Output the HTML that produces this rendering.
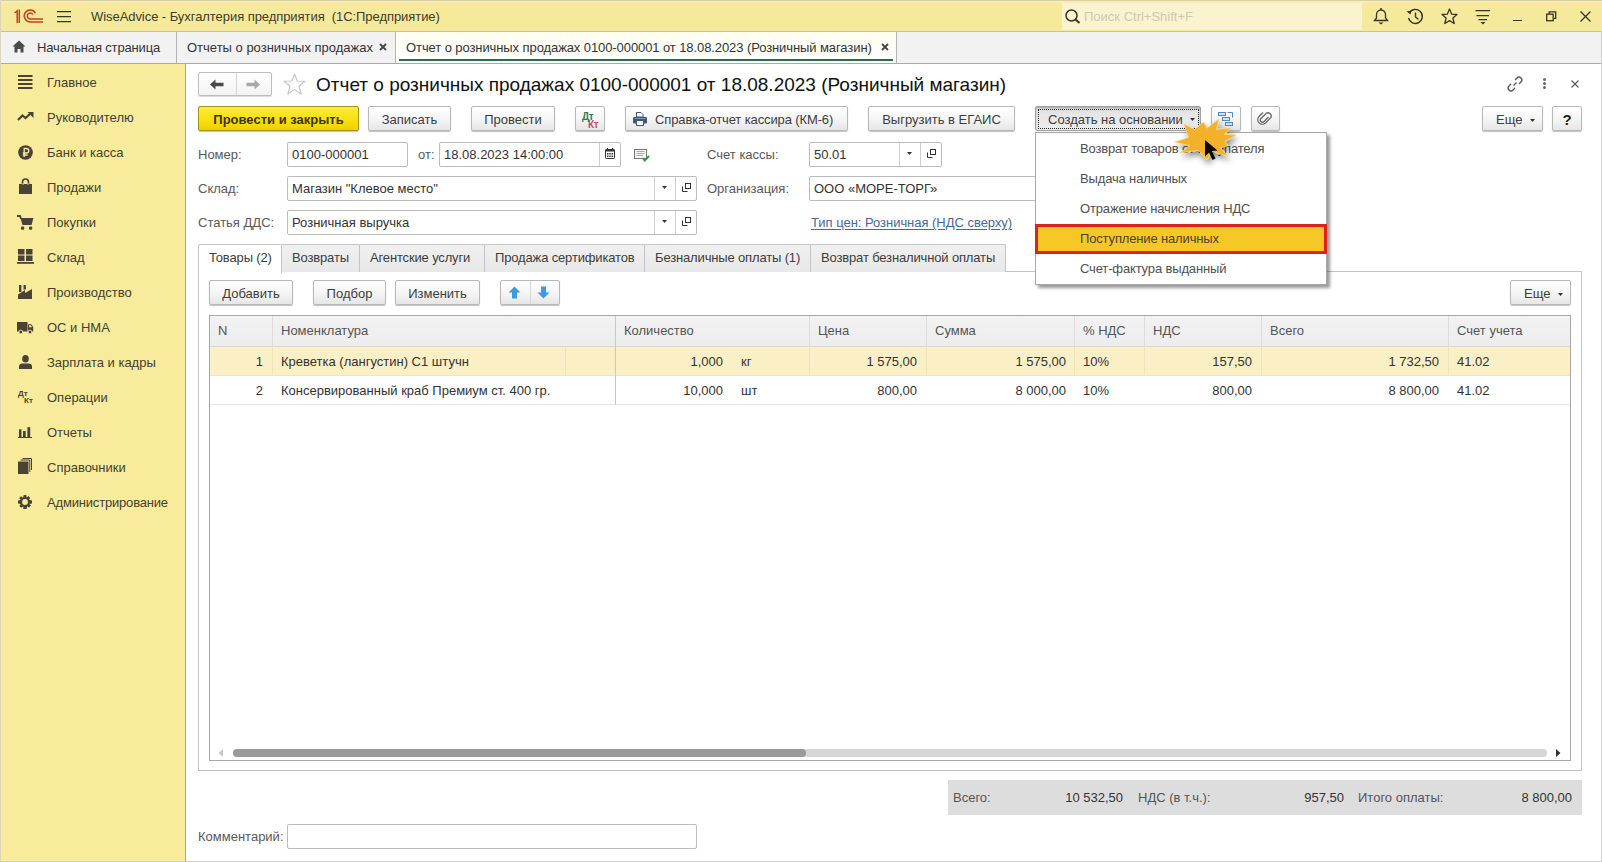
<!DOCTYPE html>
<html><head><meta charset="utf-8">
<style>
*{box-sizing:border-box;margin:0;padding:0}
html,body{width:1602px;height:862px;overflow:hidden;background:#fff}
body{position:relative;font-family:"Liberation Sans",sans-serif;font-size:13px;color:#333}
.a{position:absolute}
.t{position:absolute;white-space:nowrap;line-height:15px}
svg{position:absolute;overflow:visible}
/* title bar */
#tb{left:0;top:0;width:1602px;height:32px;background:linear-gradient(#D8D0A0 0,#D8D0A0 1px,#F6EDB8 1px,#F6EDB8 3px,#FAE89C 3px,#FAE89C 8px,#F5EA9C 8px);border-bottom:1px solid #C9C190}
#search{left:1062px;top:3px;width:300px;height:27px;background:#FBF3CE}
/* window tabs */
#wt{left:0;top:32px;width:1602px;height:32px;background:#F2F2F2;border-bottom:1px solid #A9A9A9}
.wtab{position:absolute;top:0;height:31px;border-right:1px solid #B4B4B4}
/* sidebar */
#sb{left:0;top:64px;width:186px;height:798px;background:#F8EB9C;border-right:1px solid #ABA47E}
.si{position:absolute;left:47px;color:#45402F;white-space:nowrap}
/* buttons */
.btn{position:absolute;height:25px;border:1px solid #B8B8B8;border-radius:2px;background:linear-gradient(#FFFFFF,#F4F4F4 55%,#E6E6E6);box-shadow:0 1px 1px rgba(0,0,0,.25);color:#3D3D3D;text-align:center;line-height:23px;padding-top:1px;white-space:nowrap}
.btn.def{background:linear-gradient(#FCEB3A,#F8E010 55%,#F0D000);border-color:#A39418;color:#3E3300;font-weight:bold;letter-spacing:0}
.inp{position:absolute;height:25px;border:1px solid #BCBCBC;border-radius:2px;background:#fff;color:#333;line-height:22px;padding-left:4px;padding-top:1px;white-space:nowrap;overflow:hidden}
.lbl{position:absolute;color:#595959;white-space:nowrap;line-height:15px}
.sep{position:absolute;top:0;width:1px;height:22px;background:#CFCFCF}
/* tabs */
.ptab{position:absolute;top:244px;height:28px;border:1px solid #C4C4C4;border-bottom:none;border-radius:2px 2px 0 0;background:linear-gradient(#F0F0F0,#E8E8E8);color:#3D3D3D;text-align:left;padding-left:10px;letter-spacing:-0.15px;line-height:25px;white-space:nowrap}
.hd{position:absolute;top:0;height:31px;color:#4D4D4D;line-height:30px;padding-left:8px;white-space:nowrap}
.cell{position:absolute;white-space:nowrap;color:#333}
.vl{position:absolute;width:1px;background:#DCDCDC}
</style></head><body>

<!-- TITLE BAR -->
<div id="tb" class="a"></div>
<svg style="left:14px;top:9px" width="30" height="15" viewBox="0 0 30 15">
  <g fill="none" stroke="#C43F22" stroke-width="1.5">
  <path d="M0.6 4 L3.2 1.8 V14"/><path d="M5.3 0.5 V14"/>
  <path d="M29 13 H16.25 A6 6 0 1 1 21.45 4"/>
  <path d="M29 10 H16.25 A3 3 0 1 1 18.85 5.5"/>
  </g>
</svg>
<svg style="left:57px;top:10px" width="15" height="13" viewBox="0 0 15 13"><path d="M0 1.6 H14 M0 6.6 H14 M0 11.6 H14" stroke="#3A3222" stroke-width="1.3"/></svg>
<div class="t" style="left:91px;top:9px;color:#3F3A2C;font-size:13px;letter-spacing:-0.06px">WiseAdvice - Бухгалтерия предприятия&nbsp; (1С:Предприятие)</div>
<div id="search" class="a"></div>
<svg style="left:1065px;top:9px" width="16" height="15" viewBox="0 0 16 15"><circle cx="6.5" cy="6.5" r="5.5" fill="none" stroke="#3A3222" stroke-width="1.5"/><path d="M10.5 10.5 L14.5 14" stroke="#3A3222" stroke-width="2"/></svg>
<div class="t" style="left:1084px;top:9px;color:#CFC9B3">Поиск Ctrl+Shift+F</div>
<!-- bell -->
<svg style="left:1373px;top:8px" width="16" height="17" viewBox="0 0 16 17"><path d="M1.5 12.5 H14.5 L12.5 10 V6.5 A4.5 4.5 0 0 0 3.5 6.5 V10 Z" fill="none" stroke="#3A3222" stroke-width="1.3"/><path d="M7 1 h2" stroke="#3A3222" stroke-width="1.3"/><path d="M5.5 14.5 h5 l-2.5 2z" fill="#3A3222"/></svg>
<!-- history -->
<svg style="left:1406px;top:8px" width="18" height="17" viewBox="0 0 18 17"><path d="M3.2 5 A7 7 0 1 1 2.5 10" fill="none" stroke="#3A3222" stroke-width="1.4"/><path d="M0.5 3.5 L4.5 6.5 L5.5 2.5z" fill="#3A3222"/><path d="M9.5 4.5 V9 L12.5 11.5" fill="none" stroke="#3A3222" stroke-width="1.4"/></svg>
<!-- star -->
<svg style="left:1441px;top:8px" width="17" height="17" viewBox="0 0 17 17"><path d="M8.5 1 L10.7 6.2 L16 6.5 L11.9 10 L13.2 15.5 L8.5 12.6 L3.8 15.5 L5.1 10 L1 6.5 L6.3 6.2 Z" fill="none" stroke="#3A3222" stroke-width="1.3" stroke-linejoin="round"/></svg>
<!-- filter lines -->
<svg style="left:1475px;top:10px" width="16" height="15" viewBox="0 0 16 15"><path d="M0.5 0.6 H15 M1.5 5.6 H14 M3.5 9.6 H12" stroke="#3A3222" stroke-width="1.2"/><path d="M5.5 12 h5 l-2.5 2.5z" fill="#3A3222"/></svg>
<div class="a" style="left:1513px;top:20px;width:9px;height:1px;background:#3A3222"></div>
<svg style="left:1546px;top:11px" width="11" height="11" viewBox="0 0 11 11"><rect x="0.7" y="3.2" width="6.5" height="6.5" fill="none" stroke="#3A3222" stroke-width="1.3"/><path d="M3.2 3 V0.8 H9.7 V7.3 H7.5" fill="none" stroke="#3A3222" stroke-width="1.3"/></svg>
<svg style="left:1580px;top:11px" width="11" height="11" viewBox="0 0 11 11"><path d="M0.5 0.5 L10.5 10.5 M10.5 0.5 L0.5 10.5" stroke="#3A3222" stroke-width="1.3"/></svg>

<!-- WINDOW TABS -->
<div id="wt" class="a">
  <div class="wtab" style="left:0;width:177px"></div>
  <div class="wtab" style="left:177px;width:219px"></div>
  <div class="wtab" style="left:396px;width:501px;background:linear-gradient(#FFFDF0,#FFFFFF)"></div>
</div>
<svg style="left:12px;top:40px" width="14" height="13" viewBox="0 0 14 13"><path d="M7 0.5 L13.5 6.5 H11.5 V12.5 H8.5 V9 H5.5 V12.5 H2.5 V6.5 H0.5 Z" fill="#4A4A4A"/></svg>
<div class="t" style="left:37px;top:40px;color:#333;letter-spacing:-0.15px">Начальная страница</div>
<div class="t" style="left:187px;top:40px;color:#333">Отчеты о розничных продажах</div>
<svg style="left:379px;top:43px" width="8" height="8" viewBox="0 0 8 8"><path d="M1 1 L7 7 M7 1 L1 7" stroke="#444" stroke-width="1.8"/></svg>
<div class="t" style="left:406px;top:40px;color:#333;letter-spacing:-0.09px">Отчет о розничных продажах 0100-000001 от 18.08.2023 (Розничный магазин)</div>
<svg style="left:881px;top:43px" width="8" height="8" viewBox="0 0 8 8"><path d="M1 1 L7 7 M7 1 L1 7" stroke="#444" stroke-width="1.8"/></svg>
<div class="a" style="left:399px;top:59px;width:494px;height:2px;background:#2A6E4C"></div>

<!-- SIDEBAR -->
<div id="sb" class="a"></div>
<div class="si t" style="top:75px">Главное</div>
<div class="si t" style="top:110px">Руководителю</div>
<div class="si t" style="top:145px">Банк и касса</div>
<div class="si t" style="top:180px">Продажи</div>
<div class="si t" style="top:215px">Покупки</div>
<div class="si t" style="top:250px">Склад</div>
<div class="si t" style="top:285px">Производство</div>
<div class="si t" style="top:320px">ОС и НМА</div>
<div class="si t" style="top:355px">Зарплата и кадры</div>
<div class="si t" style="top:390px">Операции</div>
<div class="si t" style="top:425px">Отчеты</div>
<div class="si t" style="top:460px">Справочники</div>
<div class="si t" style="top:495px;letter-spacing:-0.18px">Администрирование</div>



<!-- SIDEBAR ICONS -->
<svg style="left:18px;top:75px" width="15" height="14" viewBox="0 0 15 14"><path d="M0 1 H14.5 M0 5 H14.5 M0 9 H14.5 M0 13 H14.5" stroke="#4A4236" stroke-width="2"/></svg>
<svg style="left:17px;top:112px" width="17" height="9" viewBox="0 0 17 9"><path d="M1 8 L5.5 3.5 L8.5 6 L13.5 1.5" fill="none" stroke="#4A4236" stroke-width="2.2" stroke-linejoin="miter"/><path d="M10.5 0 H16.5 V6 Z" fill="#4A4236"/></svg>
<svg style="left:18px;top:145px" width="15" height="15" viewBox="0 0 15 15"><circle cx="7.5" cy="7.5" r="7.3" fill="#4A4236"/><path d="M6.2 12 V3.5 H8.5 A2.2 2.2 0 0 1 8.5 8 H4.8 M4.8 10 H9.5" fill="none" stroke="#FAEBA0" stroke-width="1.3"/></svg>
<svg style="left:19px;top:179px" width="13" height="15" viewBox="0 0 13 15"><path d="M3.5 5 V3 A3 3 0 0 1 9.5 3 V5" fill="none" stroke="#4A4236" stroke-width="1.6"/><path d="M0 5 H13 V15 H0 Z" fill="#4A4236"/><path d="M4 4 V6 M9 4 V6" stroke="#FAEBA0" stroke-width="0.8"/></svg>
<svg style="left:17px;top:215px" width="17" height="15" viewBox="0 0 17 15"><path d="M0 1 H3 L4.2 4" fill="none" stroke="#4A4236" stroke-width="1.8"/><path d="M3.5 3 H16.5 L14.5 10 H5.5 Z" fill="#4A4236"/><rect x="4" y="11.5" width="3.2" height="3.2" rx="1" fill="#4A4236"/><rect x="12" y="11.5" width="3.2" height="3.2" rx="1" fill="#4A4236"/></svg>
<svg style="left:17px;top:249px" width="17" height="15" viewBox="0 0 17 15"><rect x="1" y="0" width="6.5" height="5.5" fill="#4A4236"/><rect x="9" y="0" width="6.5" height="5.5" fill="#4A4236"/><rect x="1" y="6.5" width="6.5" height="5.5" fill="#4A4236"/><rect x="9" y="6.5" width="6.5" height="5.5" fill="#4A4236"/><rect x="0" y="13" width="17" height="1.8" fill="#4A4236"/></svg>
<svg style="left:17px;top:284px" width="17" height="16" viewBox="17 284 17 16"><path d="M18 299 V294.5 L25 290 V293 L32 289 V299 Z" fill="#4A4236"/><rect x="19" y="285" width="2.4" height="7" fill="#4A4236"/><rect x="23.5" y="285" width="2.4" height="4.5" fill="#4A4236"/></svg>
<svg style="left:16px;top:321px" width="19" height="14" viewBox="16 321 19 14"><rect x="17" y="322" width="10.5" height="9.5" fill="#4A4236"/><path d="M28 324.3 H31.2 L33.2 327 V331.5 H28 Z" fill="#4A4236"/><path d="M29 325.3 H30.8 L32 327.3 H29 Z" fill="#F8EB9C"/><circle cx="20.8" cy="332" r="1.9" fill="#4A4236" stroke="#F8EB9C" stroke-width="0.9"/><circle cx="30" cy="332" r="1.9" fill="#4A4236" stroke="#F8EB9C" stroke-width="0.9"/></svg>
<svg style="left:19px;top:355px" width="13" height="14" viewBox="0 0 13 14"><ellipse cx="6.5" cy="3.8" rx="3.3" ry="3.8" fill="#4A4236"/><path d="M0 14 V11.5 Q0 8.5 3.5 8.5 H9.5 Q13 8.5 13 11.5 V14 Z" fill="#4A4236"/></svg>
<div class="t" style="left:18px;top:390px;font-size:8px;line-height:8px;color:#4A4236;font-weight:bold;letter-spacing:0">Дт</div>
<div class="t" style="left:24px;top:397px;font-size:8px;line-height:8px;color:#4A4236;font-weight:bold;letter-spacing:0">Кт</div>
<svg style="left:17px;top:426px" width="16" height="13" viewBox="17 426 16 13"><rect x="19" y="429.3" width="2.5" height="8" fill="#4A4236"/><rect x="23" y="431" width="2.7" height="6.3" fill="#4A4236"/><rect x="27.4" y="427.2" width="2.8" height="10.1" fill="#4A4236"/><rect x="18" y="437" width="14" height="1" fill="#4A4236"/></svg>
<svg style="left:18px;top:458px" width="14" height="16" viewBox="0 0 14 16"><path d="M4.5 0.5 H13.5 V12" fill="none" stroke="#4A4236" stroke-width="1"/><path d="M2.5 2 H11.8 V14" fill="none" stroke="#4A4236" stroke-width="1"/><rect x="0" y="3.5" width="10.5" height="12.5" fill="#4A4236"/></svg>
<svg style="left:18px;top:495px" width="14" height="14" viewBox="0 0 14 14"><g transform="translate(7 7)" fill="#4A4236"><path d="M-1.3 -7 H1.3 L1.6 -4.6 L3.4 -5.9 L5.2 -4.1 L4 -2.3 L7 -1.6 V1.6 L4.4 1.9 L5.9 3.6 L4.1 5.4 L2.2 4.2 L1.6 7 H-1.6 L-1.9 4.4 L-3.8 5.8 L-5.6 4 L-4.3 2.1 L-7 1.6 V-1.6 L-4.4 -2 L-5.8 -3.9 L-4 -5.7 L-2 -4.3 Z"/><circle r="3.6"/></g><circle cx="7" cy="7" r="2.9" fill="#F8EB9C"/></svg>

<!-- FORM HEADER -->
<div class="a" style="left:198px;top:72px;width:74px;height:24px;border:1px solid #BDBDBD;border-radius:2px;background:linear-gradient(#FFFFFF,#F3F3F3);box-shadow:0 1px 1px rgba(0,0,0,.15)"></div>
<div class="a" style="left:236px;top:73px;width:1px;height:22px;background:#D5D5D5"></div>
<svg style="left:210px;top:79px" width="14" height="11" viewBox="0 0 14 11"><path d="M0 5.5 L5.5 0.5 V3.8 H13.5 V7.2 H5.5 V10.5 Z" fill="#4A4A4A"/></svg>
<svg style="left:246px;top:79px" width="14" height="11" viewBox="0 0 14 11"><path d="M14 5.5 L8.5 0.5 V3.8 H0.5 V7.2 H8.5 V10.5 Z" fill="#A8A8A8"/></svg>
<svg style="left:283px;top:73px" width="23" height="22" viewBox="0 0 23 22"><path d="M11.5 1 L14.3 8 L22 8.3 L16 13 L18.2 21 L11.5 16.6 L4.8 21 L7 13 L1 8.3 L8.7 8 Z" fill="none" stroke="#C4C4C4" stroke-width="1.1" stroke-linejoin="round"/></svg>
<div class="t" style="left:316px;top:74px;font-size:19px;line-height:21px;color:#111;letter-spacing:0">Отчет о розничных продажах 0100-000001 от 18.08.2023 (Розничный магазин)</div>

<svg style="left:1507px;top:76px" width="16" height="16" viewBox="0 0 16 16"><g fill="none" stroke="#555" stroke-width="1.3"><path d="M6.5 9.5 L9.5 6.5"/><path d="M8 4 L10 2 A2.5 2.5 0 0 1 14 6 L12 8"/><path d="M8 12 L6 14 A2.5 2.5 0 0 1 2 10 L4 8"/></g></svg>
<div class="a" style="left:1543px;top:78px;width:3px;height:3px;border-radius:50%;background:#666"></div>
<div class="a" style="left:1543px;top:82px;width:3px;height:3px;border-radius:50%;background:#666"></div>
<div class="a" style="left:1543px;top:86px;width:3px;height:3px;border-radius:50%;background:#666"></div>
<svg style="left:1571px;top:80px" width="8" height="8" viewBox="0 0 8 8"><path d="M0.5 0.5 L7.5 7.5 M7.5 0.5 L0.5 7.5" stroke="#555" stroke-width="1.1"/></svg>

<!-- COMMAND BAR -->
<div class="btn def" style="left:198px;top:106px;width:161px">Провести и закрыть</div>
<div class="btn" style="left:368px;top:106px;width:83px">Записать</div>
<div class="btn" style="left:471px;top:106px;width:84px">Провести</div>
<div class="btn" style="left:575px;top:106px;width:30px"></div>
<div class="t" style="left:582px;top:112px;font-size:10px;line-height:10px;color:#2F7E52;font-weight:bold;letter-spacing:-0.3px">Дт</div>
<div class="t" style="left:588px;top:120px;font-size:10px;line-height:10px;color:#C4505E;font-weight:bold;letter-spacing:-0.3px">Кт</div>
<div class="btn" style="left:625px;top:106px;width:223px;text-align:left;padding-left:29px;letter-spacing:-0.12px">Справка-отчет кассира (КМ-6)</div>
<svg style="left:632px;top:111px" width="16" height="15" viewBox="0 0 16 15"><path d="M4.5 1.5 H9 L11 3.5 V6 H4.5 Z" fill="#fff" stroke="#3D5775" stroke-width="1"/><rect x="1" y="6" width="14" height="6.5" rx="1.2" fill="#3D5775"/><path d="M2.5 7.5 H13.5" stroke="#8FA6BF" stroke-width="0.8"/><rect x="4.5" y="9.5" width="7" height="5" fill="#fff" stroke="#3D5775" stroke-width="1"/></svg>
<div class="btn" style="left:868px;top:106px;width:147px">Выгрузить в ЕГАИС</div>
<div class="btn" style="left:1035px;top:106px;width:166px;background:linear-gradient(#DADADA,#E6E6E6 30%,#EDEDED);border-color:#A0A0A0;box-shadow:inset 0 1px 2px rgba(0,0,0,.25);text-align:left;padding-left:12px">Создать на основании</div>
<div class="a" style="left:1038px;top:109px;width:161px;height:20px;border:1px dotted #222"></div>
<svg style="left:1190px;top:118px" width="5" height="3" viewBox="0 0 5 3"><path d="M0 0 H5 L2.5 3Z" fill="#333"/></svg>
<div class="btn" style="left:1211px;top:106px;width:30px"></div>
<svg style="left:1218px;top:112px" width="16" height="14" viewBox="0 0 16 14"><g fill="#CFE3F5" stroke="#4E8BC4" stroke-width="1"><rect x="0.5" y="0.5" width="7" height="3"/><rect x="4.5" y="5.5" width="7" height="3"/><rect x="7.5" y="10.5" width="7" height="3"/></g><path d="M9.5 0.5 H14.5 V5.5" fill="none" stroke="#4E8BC4"/></svg>
<div class="btn" style="left:1251px;top:106px;width:29px"></div>
<svg style="left:1258px;top:111px" width="14" height="15" viewBox="0 0 14 15"><path d="M10.5 6 L6 10.5 A2.1 2.1 0 0 1 3 7.5 L8.5 2 A3.5 3.5 0 0 1 13 6.5 L7.5 12 A4.6 4.6 0 0 1 1 5.5 L5 1.5" fill="none" stroke="#666" stroke-width="1.3"/></svg>
<div class="btn" style="left:1482px;top:106px;width:61px;text-align:left;padding-left:13px">Еще</div>
<svg style="left:1530px;top:119px" width="5" height="3" viewBox="0 0 5 3"><path d="M0 0 H5 L2.5 3Z" fill="#333"/></svg>
<div class="btn" style="left:1552px;top:106px;width:30px;font-weight:bold;font-size:15px;color:#222">?</div>

<!-- FIELDS -->
<div class="lbl" style="left:198px;top:147px">Номер:</div>
<div class="inp" style="left:287px;top:142px;width:121px">0100-000001</div>
<div class="lbl" style="left:418px;top:147px">от:</div>
<div class="inp" style="left:439px;top:142px;width:182px">18.08.2023 14:00:00</div>
<div class="a" style="left:599px;top:143px;width:1px;height:23px;background:#CFCFCF"></div>
<svg style="left:605px;top:148px" width="10" height="11" viewBox="0 0 10 11"><rect x="0.5" y="1.5" width="9" height="9" rx="0.8" fill="none" stroke="#333" stroke-width="1"/><rect x="0.5" y="1.5" width="9" height="2" fill="#333"/><path d="M2.5 0 V2 M7.5 0 V2" stroke="#333" stroke-width="1.2"/><g fill="#333"><rect x="2" y="5" width="1.5" height="1.5"/><rect x="4.3" y="5" width="1.5" height="1.5"/><rect x="6.6" y="5" width="1.5" height="1.5"/><rect x="2" y="7.5" width="1.5" height="1.5"/><rect x="4.3" y="7.5" width="1.5" height="1.5"/><rect x="6.6" y="7.5" width="1.5" height="1.5"/></g></svg>
<svg style="left:634px;top:149px" width="16" height="14" viewBox="0 0 16 14"><rect x="0.5" y="0.5" width="12" height="9" fill="#F6F6F6" stroke="#777" stroke-width="1"/><path d="M2.5 2.5 H10.5 M2.5 4.5 H10.5 M2.5 6.5 H9" stroke="#999" stroke-width="0.8"/><path d="M8.8 9.2 L10.8 11.6 L15 7" fill="none" stroke="#2E9A3E" stroke-width="2"/></svg>
<div class="lbl" style="left:707px;top:147px">Счет кассы:</div>
<div class="inp" style="left:809px;top:142px;width:133px">50.01</div>
<div class="a" style="left:899px;top:143px;width:1px;height:23px;background:#CFCFCF"></div>
<div class="a" style="left:920px;top:143px;width:1px;height:23px;background:#CFCFCF"></div>
<svg style="left:907px;top:152px" width="5" height="3" viewBox="0 0 5 3"><path d="M0 0 H5 L2.5 3Z" fill="#333"/></svg>
<svg style="left:927px;top:149px" width="10" height="10" viewBox="0 0 10 10"><path d="M0.5 3.5 V8.5 H5.5" fill="none" stroke="#333" stroke-width="1"/><rect x="3.5" y="0.5" width="5" height="5" fill="none" stroke="#333" stroke-width="1"/></svg>

<div class="lbl" style="left:198px;top:181px">Склад:</div>
<div class="inp" style="left:287px;top:176px;width:410px">Магазин "Клевое место"</div>
<div class="a" style="left:654px;top:177px;width:1px;height:23px;background:#CFCFCF"></div>
<div class="a" style="left:675px;top:177px;width:1px;height:23px;background:#CFCFCF"></div>
<svg style="left:662px;top:186px" width="5" height="3" viewBox="0 0 5 3"><path d="M0 0 H5 L2.5 3Z" fill="#333"/></svg>
<svg style="left:682px;top:183px" width="10" height="10" viewBox="0 0 10 10"><path d="M0.5 3.5 V8.5 H5.5" fill="none" stroke="#333" stroke-width="1"/><rect x="3.5" y="0.5" width="5" height="5" fill="none" stroke="#333" stroke-width="1"/></svg>
<div class="lbl" style="left:707px;top:181px">Организация:</div>
<div class="inp" style="left:809px;top:176px;width:260px">ООО «МОРЕ-ТОРГ»</div>

<div class="lbl" style="left:198px;top:215px">Статья ДДС:</div>
<div class="inp" style="left:287px;top:210px;width:410px">Розничная выручка</div>
<div class="a" style="left:654px;top:211px;width:1px;height:23px;background:#CFCFCF"></div>
<div class="a" style="left:675px;top:211px;width:1px;height:23px;background:#CFCFCF"></div>
<svg style="left:662px;top:220px" width="5" height="3" viewBox="0 0 5 3"><path d="M0 0 H5 L2.5 3Z" fill="#333"/></svg>
<svg style="left:682px;top:217px" width="10" height="10" viewBox="0 0 10 10"><path d="M0.5 3.5 V8.5 H5.5" fill="none" stroke="#333" stroke-width="1"/><rect x="3.5" y="0.5" width="5" height="5" fill="none" stroke="#333" stroke-width="1"/></svg>
<div class="t" style="left:811px;top:215px;color:#46689C;text-decoration:underline;text-underline-offset:2px;letter-spacing:-0.03px">Тип цен: Розничная (НДС сверху)</div>

<!-- TAB PANEL -->
<div class="a" style="left:198px;top:271px;width:1384px;height:500px;border:1px solid #C4C4C4"></div>
<div class="ptab" style="left:281px;width:79px">Возвраты</div>
<div class="ptab" style="left:359px;width:126px">Агентские услуги</div>
<div class="ptab" style="left:484px;width:161px">Продажа сертификатов</div>
<div class="ptab" style="left:644px;width:167px">Безналичные оплаты (1)</div>
<div class="ptab" style="left:810px;width:196px">Возврат безналичной оплаты</div>
<div class="ptab" style="left:198px;width:84px;height:29px;background:#fff;border-color:#C4C4C4">Товары (2)</div>

<div class="btn" style="left:209px;top:280px;width:84px">Добавить</div>
<div class="btn" style="left:313px;top:280px;width:73px">Подбор</div>
<div class="btn" style="left:395px;top:280px;width:85px">Изменить</div>
<div class="btn" style="left:500px;top:280px;width:60px"></div>
<div class="a" style="left:530px;top:281px;width:1px;height:23px;background:#D5D5D5"></div>
<svg style="left:508px;top:286px" width="13" height="13" viewBox="0 0 13 13"><path d="M6.5 0.5 L12.5 6.5 H9 V12.5 H4 V6.5 H0.5 Z" fill="#3D9BE0"/></svg>
<svg style="left:537px;top:286px" width="13" height="13" viewBox="0 0 13 13"><path d="M6.5 12.5 L12.5 6.5 H9 V0.5 H4 V6.5 H0.5 Z" fill="#3D9BE0"/></svg>
<div class="btn" style="left:1510px;top:280px;width:61px;text-align:left;padding-left:13px">Еще</div>
<svg style="left:1558px;top:293px" width="5" height="3" viewBox="0 0 5 3"><path d="M0 0 H5 L2.5 3Z" fill="#333"/></svg>

<!-- TABLE -->
<div class="a" style="left:209px;top:315px;width:1362px;height:446px;border:1px solid #A8A8A8;background:#fff"></div>
<div class="a" style="left:210px;top:316px;width:1360px;height:31px;background:linear-gradient(#F2F2F3,#EDEDEE);border-bottom:1px solid #D8D8D8"></div>
<div class="a" style="left:210px;top:347px;width:1360px;height:29px;background:#FBEFC6;border-bottom:1px solid #E8E4D4"></div>
<div class="a" style="left:210px;top:376px;width:1360px;height:29px;border-bottom:1px solid #E6E6E6"></div>
<!-- header col seps -->
<div class="vl" style="left:272px;top:316px;height:31px"></div>
<div class="vl" style="left:615px;top:316px;height:89px;background:#C8C8C8"></div>
<div class="vl" style="left:809px;top:316px;height:31px"></div>
<div class="vl" style="left:926px;top:316px;height:31px"></div>
<div class="vl" style="left:1074px;top:316px;height:31px"></div>
<div class="vl" style="left:1144px;top:316px;height:31px"></div>
<div class="vl" style="left:1261px;top:316px;height:31px"></div>
<div class="vl" style="left:1448px;top:316px;height:31px"></div>
<div class="vl" style="left:272px;top:347px;height:29px;background:#EFE3BE"></div><div class="vl" style="left:565px;top:347px;height:29px;background:#EFE3BE"></div><div class="vl" style="left:809px;top:347px;height:29px;background:#EFE3BE"></div><div class="vl" style="left:926px;top:347px;height:29px;background:#EFE3BE"></div><div class="vl" style="left:1074px;top:347px;height:29px;background:#EFE3BE"></div><div class="vl" style="left:1144px;top:347px;height:29px;background:#EFE3BE"></div><div class="vl" style="left:1261px;top:347px;height:29px;background:#EFE3BE"></div><div class="vl" style="left:1448px;top:347px;height:29px;background:#EFE3BE"></div>
<div class="t" style="left:218px;top:323px;color:#555">N</div>
<div class="t" style="left:281px;top:323px;color:#555">Номенклатура</div>
<div class="t" style="left:624px;top:323px;color:#555">Количество</div>
<div class="t" style="left:818px;top:323px;color:#555">Цена</div>
<div class="t" style="left:935px;top:323px;color:#555">Сумма</div>
<div class="t" style="left:1083px;top:323px;color:#555">% НДС</div>
<div class="t" style="left:1153px;top:323px;color:#555">НДС</div>
<div class="t" style="left:1270px;top:323px;color:#555">Всего</div>
<div class="t" style="left:1457px;top:323px;color:#555">Счет учета</div>

<div class="t" style="left:213px;top:354px;width:50px;text-align:right">1</div>
<div class="t" style="left:281px;top:354px">Креветка (лангустин) С1 штучн</div>
<div class="t" style="left:623px;top:354px;width:100px;text-align:right">1,000</div>
<div class="t" style="left:741px;top:354px">кг</div>
<div class="t" style="left:817px;top:354px;width:100px;text-align:right">1 575,00</div>
<div class="t" style="left:935px;top:354px;width:131px;text-align:right">1 575,00</div>
<div class="t" style="left:1083px;top:354px">10%</div>
<div class="t" style="left:1152px;top:354px;width:100px;text-align:right">157,50</div>
<div class="t" style="left:1270px;top:354px;width:169px;text-align:right">1 732,50</div>
<div class="t" style="left:1457px;top:354px">41.02</div>

<div class="t" style="left:213px;top:383px;width:50px;text-align:right">2</div>
<div class="t" style="left:281px;top:383px">Консервированный краб Премиум ст. 400 гр.</div>
<div class="t" style="left:623px;top:383px;width:100px;text-align:right">10,000</div>
<div class="t" style="left:741px;top:383px">шт</div>
<div class="t" style="left:817px;top:383px;width:100px;text-align:right">800,00</div>
<div class="t" style="left:935px;top:383px;width:131px;text-align:right">8 000,00</div>
<div class="t" style="left:1083px;top:383px">10%</div>
<div class="t" style="left:1152px;top:383px;width:100px;text-align:right">800,00</div>
<div class="t" style="left:1270px;top:383px;width:169px;text-align:right">8 800,00</div>
<div class="t" style="left:1457px;top:383px">41.02</div>

<!-- scrollbar -->
<svg style="left:218px;top:749px" width="5" height="8" viewBox="0 0 5 8"><path d="M5 0 V8 L0.5 4Z" fill="#C8C8C8"/></svg>
<div class="a" style="left:233px;top:749px;width:1314px;height:8px;border-radius:4px;background:#D6D6D6"></div>
<div class="a" style="left:233px;top:749px;width:573px;height:8px;border-radius:4px;background:#9A9A9A"></div>
<svg style="left:1556px;top:749px" width="5" height="8" viewBox="0 0 5 8"><path d="M0 0 V8 L4.5 4Z" fill="#333"/></svg>

<!-- TOTALS -->
<div class="a" style="left:948px;top:780px;width:634px;height:35px;background:#DEDDDE"></div>
<div class="t" style="left:953px;top:790px;color:#555">Всего:</div>
<div class="t" style="left:1023px;top:790px;width:100px;text-align:right;color:#333">10 532,50</div>
<div class="t" style="left:1138px;top:790px;color:#555">НДС (в т.ч.):</div>
<div class="t" style="left:1244px;top:790px;width:100px;text-align:right;color:#333">957,50</div>
<div class="t" style="left:1358px;top:790px;color:#555">Итого оплаты:</div>
<div class="t" style="left:1472px;top:790px;width:100px;text-align:right;color:#333">8 800,00</div>

<!-- COMMENT -->
<div class="lbl" style="left:198px;top:829px">Комментарий:</div>
<div class="inp" style="left:287px;top:824px;width:410px"></div>

<!-- window borders -->
<div class="a" style="left:0;top:0;width:1px;height:862px;background:#DCD6B8"></div>
<div class="a" style="left:1601px;top:31px;width:1px;height:831px;background:#D0D0D0"></div>
<div class="a" style="left:0;top:861px;width:1602px;height:1px;background:#D0D0D0"></div>

<!-- POPUP MENU -->
<div class="a" style="left:1035px;top:132px;width:292px;height:153px;background:#fff;border:1px solid #A8A8A8;box-shadow:3px 3px 3px rgba(0,0,0,.4)"></div>
<div class="t" style="left:1080px;top:141px;color:#505050;letter-spacing:-0.15px">Возврат товаров от покупателя</div>
<div class="t" style="left:1080px;top:171px;color:#505050;letter-spacing:-0.15px">Выдача наличных</div>
<div class="t" style="left:1080px;top:201px;color:#505050;letter-spacing:-0.15px">Отражение начисления НДС</div>
<div class="a" style="left:1035px;top:224px;width:292px;height:30px;background:#F6C825;border:3px solid #E0201B"></div>
<div class="t" style="left:1080px;top:231px;color:#4A4232;letter-spacing:-0.15px">Поступление наличных</div>
<div class="t" style="left:1080px;top:261px;color:#505050;letter-spacing:-0.15px">Счет-фактура выданный</div>

<!-- starburst + cursor -->
<svg style="left:1160px;top:100px" width="95" height="75" viewBox="1160 100 95 75">
<defs><filter id="sh" x="-40%" y="-40%" width="180%" height="180%"><feGaussianBlur in="SourceAlpha" stdDeviation="3"/><feOffset dx="2" dy="4"/><feComponentTransfer><feFuncA type="linear" slope="0.45"/></feComponentTransfer><feMerge><feMergeNode/><feMergeNode in="SourceGraphic"/></feMerge></filter></defs>
<path filter="url(#sh)" d="M1175.0 142.0 L1188.7 137.4 L1184.0 124.0 L1194.8 129.5 L1203.5 122.0 L1207.0 128.2 L1219.0 119.0 L1216.2 129.5 L1231.0 128.0 L1224.1 134.3 L1236.0 135.0 L1224.7 141.7 L1228.0 145.5 L1220.4 147.8 L1228.0 156.0 L1211.9 151.4 L1207.0 160.0 L1198.5 150.2 L1180.0 153.0 L1189.9 145.9 Z" fill="#F3B02C" stroke="#F8D57E" stroke-width="0.8" stroke-linejoin="miter"/>
<path d="M1205 140 L1205 156.5 L1209 152.5 L1212.5 160 L1215.5 158.5 L1212 151 L1217.5 150.5 Z" fill="#0A0A0A"/>
</svg>
</body></html>
